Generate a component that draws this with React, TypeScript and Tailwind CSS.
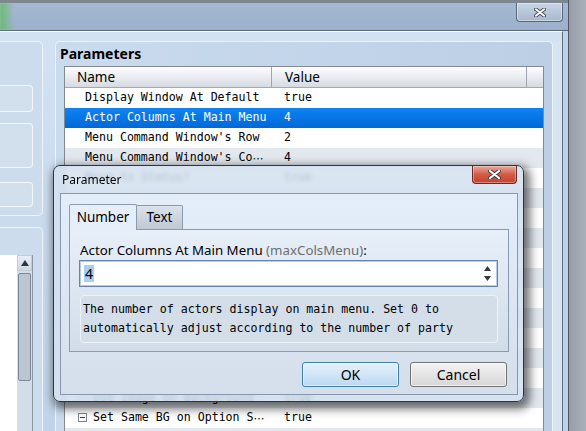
import React from "react";

type Row = { name: string; value: string; tree?: boolean };

const rows: Row[] = [
  { name: "Display Window At Default", value: "true" },
  { name: "Actor Columns At Main Menu", value: "4" },
  { name: "Menu Command Window's Row", value: "2" },
  { name: "Menu Command Window's Co", value: "4" },
  { name: "Move to Status?", value: "true" },
  { name: "", value: "" },
  { name: "", value: "" },
  { name: "", value: "" },
  { name: "", value: "" },
  { name: "", value: "" },
  { name: "", value: "" },
  { name: "", value: "" },
  { name: "", value: "" },
  { name: "", value: "" },
  { name: "", value: "" },
  { name: "Use Image on Background", value: "true", tree: true },
  { name: "Set Same BG on Option S", value: "true", tree: true },
  { name: "", value: "" },
];

const mono = "font-['DejaVu_Sans_Mono',monospace] text-[11.6px]";

function CloseX({ w, h }: { w: number; h: number }) {
  return (
    <svg width={w} height={h} viewBox="0 0 13 9">
      <path d="M2 1 L11 8 M11 1 L2 8" stroke="#3a3f48" strokeWidth="4" strokeLinecap="round" />
      <path d="M2 1 L11 8 M11 1 L2 8" stroke="#ffffff" strokeWidth="2.2" strokeLinecap="round" />
    </svg>
  );
}

function TreeIcon() {
  return (
    <span className="mr-[6px] flex h-[9px] w-[9px] items-center justify-center border border-[#7c8794] bg-white">
      <span className="h-px w-[5px] bg-[#2b3a55]" />
    </span>
  );
}

function Table() {
  return (
    <div className="ml-[8px] flex w-[480px] flex-1 flex-col overflow-hidden border border-b-0 border-[#83898f] bg-white">
      <div className="flex h-[21px] shrink-0 border-b border-[#a2a9b2] bg-gradient-to-b from-[#fdfdfe] to-[#d6dbe2] text-[13.5px] leading-[20px]">
        <div className="w-[207px] border-r border-[#9ea5ae] pl-[12px]">Name</div>
        <div className="w-[255px] border-r border-[#9ea5ae] pl-[13px]">Value</div>
        <div className="flex-1" />
      </div>
      {rows.map((r, i) => {
        const sel = i === 1;
        const bg = sel
          ? "bg-gradient-to-b from-[#1083f4] to-[#0068d6] text-white"
          : i % 2 === 1
            ? "bg-[#e3e8ef]"
            : "bg-white";
        return (
          <div key={i} className={`flex h-[20px] shrink-0 items-center ${mono} ${bg}`}>
            <div className={`flex w-[207px] items-center whitespace-nowrap ${r.tree ? "pl-[13px]" : "pl-[20px]"}`}>
              {r.tree && <TreeIcon />}
              {r.name}
              {(i === 3 || i === 16) && (
                <span className="font-['Noto_Sans_CJK_JP',sans-serif] text-[11px]">⋯</span>
              )}
            </div>
            <div className="pl-[12px]">{r.value}</div>
          </div>
        );
      })}
    </div>
  );
}

function Dialog() {
  return (
    <div className="absolute left-[53px] top-[165px] flex h-[237px] w-[471px] flex-col rounded-[7px] border border-[#2c343e] bg-[#d4e1f0]/85 shadow-[3px_4px_10px_3px_rgba(0,0,0,0.55)] backdrop-blur-[2px]">
      <div className="flex h-[27px] shrink-0 items-start justify-between">
        <div className="pl-[8px] pt-[6px] text-[12px] leading-[16px]">Parameter</div>
        <div className="mr-[6px] flex h-[18px] w-[45px] items-center justify-center rounded-b-[4px] border border-t-0 border-[#6b2a22] bg-gradient-to-b from-[#e9a99b] via-[#d25a46] to-[#c4432f] shadow-[inset_0_0_0_1px_rgba(255,255,255,0.35)]">
          <CloseX w={13} h={9} />
        </div>
      </div>
      <div className="mb-[6px] ml-[6px] mr-[5px] flex flex-1 flex-col border border-[#8797ad] bg-gradient-to-b from-[#e4eefa] to-[#d4dfeb] pl-[8px] pt-[10px]">
        <div className="flex h-[25px] items-end">
          <div className="relative z-10 -mb-px flex h-[26px] w-[68px] items-center justify-center rounded-t-[2px] border border-b-0 border-[#8a9ab0] bg-[#e6eefa] text-[13.5px]">
            Number
          </div>
          <div className="flex h-[24px] w-[46px] items-center justify-center rounded-tr-[2px] border border-b-0 border-l-0 border-[#8a9ab0] bg-gradient-to-b from-[#dbe2ea] to-[#bfc8d3] text-[13.5px]">
            Text
          </div>
        </div>
        <div className="flex h-[123px] w-[440px] flex-col border border-[#8a9ab0] bg-gradient-to-b from-[#e7eff9] to-[#d2dde9] pl-[10px] pt-[11px]">
          <div className="text-[13.3px] leading-[18px]">
            Actor Columns At Main Menu <span className="text-[#6e6e6e]">(maxColsMenu)</span>:
          </div>
          <div className="-ml-px mt-px flex h-[27px] w-[419px] items-center justify-between border border-[#6483b0] bg-white pl-[4px] pr-[6px] shadow-[inset_0_0_0_1px_#b9cbe2]">
            <span className="bg-[#a8cff1] px-px text-[14px] leading-[17px]">4</span>
            <div className="flex flex-col gap-[5px]">
              <svg width="7" height="5" viewBox="0 0 7 5">
                <path d="M3.5 0 L7 5 L0 5 Z" fill="#333a44" />
              </svg>
              <svg width="7" height="5" viewBox="0 0 7 5">
                <path d="M0 0 L7 0 L3.5 5 Z" fill="#333a44" />
              </svg>
            </div>
          </div>
          <div className={`mt-[8px] h-[48px] w-[418px] rounded-[4px] border border-[#eef3f9] bg-[#d3dee9] pl-[2px] pt-[4px] leading-[19px] ${mono}`}>
            <div>The number of actors display on main menu. Set 0 to</div>
            <div>automatically adjust according to the number of party</div>
          </div>
        </div>
        <div className="mt-[10px] flex justify-end gap-[11px] pr-[10px]">
          <button className="h-[25px] w-[97px] rounded-[3px] border border-[#3c7fb1] bg-gradient-to-b from-[#e6f2fc] to-[#bcd8f1] text-[14px] shadow-[inset_0_0_0_1px_rgba(255,255,255,0.6)]">
            OK
          </button>
          <button className="h-[25px] w-[97px] rounded-[3px] border border-[#707070] bg-gradient-to-b from-[#f3f3f3] to-[#d6d6d6] text-[14px] shadow-[inset_0_0_0_1px_rgba(255,255,255,0.7)]">
            Cancel
          </button>
        </div>
      </div>
    </div>
  );
}

export default function App() {
  return (
    <div className="relative flex h-[431px] w-[586px] overflow-hidden bg-[#a8adb8] font-['Noto_Sans',sans-serif] text-black">
      <div className="flex h-full w-[569px] shrink-0 flex-col border-r border-[#4b5564]">
        <div className="flex h-[31px] shrink-0 items-start justify-between border-b border-t-[3px] border-b-[#56657a] border-t-[#7e8690] bg-gradient-to-b from-[#a6b8d2] to-[#9cb0cc]">
          <div className="h-full w-[14px] bg-gradient-to-r from-[#68bc6e] to-transparent blur-[1px]" />
          <div className="mr-[5px] flex h-[19px] w-[47px] items-center justify-center rounded-b-[4px] border border-t-0 border-[#5b687b] bg-gradient-to-b from-[#c9d5e5] to-[#a8b8ce] shadow-[inset_0_0_0_1px_rgba(255,255,255,0.4)]">
            <CloseX w={12} h={9} />
          </div>
        </div>
        <div className="flex min-h-0 flex-1">
          <div className="flex min-h-0 flex-1 border-r border-t border-r-[#5c6a7c] border-t-white bg-gradient-to-b from-[#d3e2f3] to-[#c0d3e8] pt-[9px]">
            <div className="flex w-[43px] shrink-0 flex-col">
              <div className="flex h-[175px] flex-col rounded-r-[5px] border border-l-0 border-[#edf4fc] bg-[#cddcec] pt-[43px]">
                <div className="h-[27px] w-[33px] rounded-r-[4px] border border-l-0 border-[#f2f7fc] bg-[#d2dfec]" />
                <div className="mt-[11px] h-[45px] w-[33px] rounded-r-[4px] border border-l-0 border-[#f2f7fc] bg-[#d2dfec]" />
                <div className="mt-[14px] h-[25px] w-[33px] rounded-r-[4px] border border-l-0 border-[#f2f7fc] bg-[#d2dfec]" />
              </div>
              <div className="mt-[11px] flex flex-1 flex-col rounded-tr-[5px] border border-b-0 border-l-0 border-[#edf4fc] bg-[#cddcec] pt-[27px]">
                <div className="flex flex-1">
                  <div className="w-[17px] bg-white" />
                  <div className="flex w-[16px] flex-col border-r border-[#8c97a5] bg-[#d3dce7]">
                    <div className="flex h-[16px] items-center justify-center border border-[#c2ccd8] bg-gradient-to-b from-[#e9eef4] to-[#cfd8e3]">
                      <svg width="8" height="6" viewBox="0 0 8 6">
                        <path d="M4 0 L8 6 L0 6 Z" fill="#2d3440" />
                      </svg>
                    </div>
                    <div className="mx-px mt-[2px] h-[108px] rounded-[2px] border border-[#7d8896] bg-[#bcc6d1]" />
                  </div>
                </div>
              </div>
            </div>
            <div className="ml-[12px] flex w-[498px] shrink-0 flex-col rounded-t-[5px] border border-b-0 border-[#eef4fb] bg-gradient-to-r from-[#cadbee] to-[#bccfe5]">
              <div className="h-[24px] shrink-0 pl-[4px] pt-[2px] text-[14px] font-bold leading-[19px]">Parameters</div>
              <Table />
            </div>
            <div className="flex-1 bg-[#d6e4f3]" />
          </div>
          <div className="w-[5px] bg-[#c0d2e7]" />
        </div>
      </div>
      <div className="flex-1 bg-gradient-to-r from-[#979eaa] to-[#aab0ba]" />
      <Dialog />
    </div>
  );
}
